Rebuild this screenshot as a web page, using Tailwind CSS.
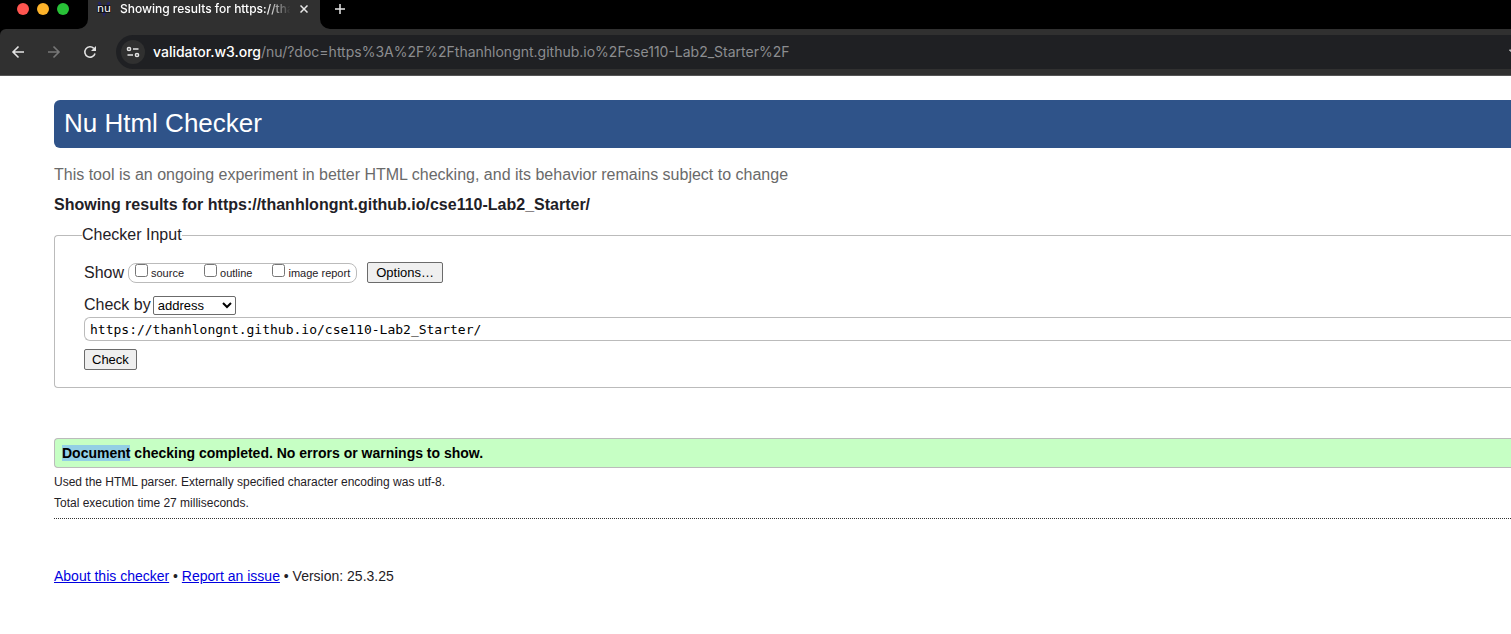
<!DOCTYPE html>
<html lang="en">
<head>
<meta charset="utf-8">
<title>Showing results for https://thanhlongnt.github.io/cse110-Lab2_Starter/</title>
<script src="https://cdn.jsdelivr.net/npm/@tailwindcss/browser@4"></script>
</head>
<body class="bg-white font-['Liberation_Sans',Arial,sans-serif] text-base text-[#1f2126] overflow-x-hidden">

<!-- Browser chrome -->
<header class="bg-black font-[Inter,sans-serif]">
  <div class="flex h-[29px] items-end">
    <div class="flex h-[26px] w-[78px] shrink-0 gap-2 pl-[17px]">
      <span class="size-3 rounded-full bg-[#ff5550]"></span>
      <span class="size-3 rounded-full bg-[#fdb32a]"></span>
      <span class="size-3 rounded-full bg-[#28c137]"></span>
    </div>
    <svg class="size-[10px] shrink-0" viewBox="0 0 10 10" fill="#303030" aria-hidden="true"><path d="M10 0V10H0A10 10 0 0 0 10 0Z"/></svg>
    <div class="flex h-[29px] w-[232px] shrink-0 items-start rounded-br-none bg-[#303030] pl-2">
      <svg class="h-[18px] w-4 shrink-0" viewBox="0 0 16 18" aria-hidden="true">
        <path d="M3 2 8 14 13 2" fill="none" stroke="#25256a" stroke-width="2.500"/>
        <rect x="1" y="5" width="14" height="8" rx="2" fill="#14141c"/>
        <text x="8" y="12" text-anchor="middle" font-family="DejaVu Sans, sans-serif" font-size="11" fill="#fff">nu</text>
      </svg>
      <span class="ml-2 w-[174px] whitespace-nowrap text-xs font-medium leading-[18px] text-white [mask-image:linear-gradient(to_right,black_84%,transparent_98%)]">Showing results for https://tha</span>
      <button type="button" aria-label="Close tab" class="ml-[2px] mt-px flex size-4 items-center justify-center text-[#e8e8e8]">
        <svg class="size-2" viewBox="0 0 8 8" fill="none" stroke="currentColor" stroke-width="1.500"><path d="M.5 .5 7.500 7.500M7.500 .5.5 7.500"/></svg>
      </button>
    </div>
    <svg class="size-[10px] shrink-0" viewBox="0 0 10 10" fill="#303030" aria-hidden="true"><path d="M0 0V10H10A10 10 0 0 1 0 0Z"/></svg>
    <button type="button" aria-label="New tab" class="flex h-[29px] w-5 justify-center pt-1 text-[#e8e8e8]">
      <svg class="size-[10px]" viewBox="0 0 10 10" fill="none" stroke="currentColor" stroke-width="1.500"><path d="M5 0V10M0 5H10"/></svg>
    </button>
  </div>
  <div class="flex h-[47px] items-center rounded-tl-md border-b border-[#555] bg-[#303030] pl-[10px]">
    <button type="button" aria-label="Back" class="size-4 text-[#e3e3e3]"><svg viewBox="0 0 16 16" fill="none" stroke="currentColor" stroke-width="1.600"><path d="M14 8H3M8.500 2.500 3 8 8.500 13.500"/></svg></button>
    <button type="button" aria-label="Forward" class="ml-5 size-4 text-[#777]"><svg viewBox="0 0 16 16" fill="none" stroke="currentColor" stroke-width="1.600"><path d="M2 8H13M7.500 2.500 13 8 7.500 13.500"/></svg></button>
    <button type="button" aria-label="Reload" class="ml-5 size-4 text-[#e3e3e3]"><svg viewBox="0 0 16 16" fill="none" stroke="currentColor" stroke-width="1.600"><path d="M13 9.500A5.200 5.200 0 1 1 11.800 4.400"/><path d="M14 2V7H9Z" fill="currentColor" stroke="none"/></svg></button>
    <div class="ml-[18px] flex h-[34px] flex-1 items-center overflow-hidden rounded-l-full bg-[#1f2023] pl-[5px] text-sm">
      <button type="button" aria-label="View site information" class="flex size-6 shrink-0 items-center justify-center rounded-full bg-[#303030] text-[#e3e3e3]">
        <svg class="size-[14px]" viewBox="0 0 14 14" fill="none" stroke="currentColor" stroke-width="1.500"><circle cx="3" cy="4" r="1.600"/><path d="M7 4H12.500M1.500 10H7"/><circle cx="11" cy="10" r="1.600"/></svg>
      </button>
      <a href="#" class="ml-2 flex-1 whitespace-nowrap text-[#8c8d90]"><span class="font-medium text-white">validator.w3.org</span>/nu/?doc=https%3A%2F%2Fthanhlongnt.github.io%2Fcse110-Lab2_Starter%2F</a>
      <svg class="-mr-[14px] size-4 shrink-0" viewBox="0 0 16 16" fill="none" stroke="#d0d0d0" stroke-width="1.300" aria-hidden="true"><path d="M8 1 9.900 5.800 15 6.300 11.100 9.600 12.300 14.600 8 12 3.700 14.600 4.900 9.600 1 6.300 6.100 5.800Z"/></svg>
    </div>
  </div>
</header>

<main class="pl-[54px] pt-6">
  <h1 class="rounded-l-md bg-[#2f5389] pb-[2px] pl-[10px] text-[26px] leading-[46px] text-white">Nu Html Checker</h1>
  <p class="mt-[15px] leading-6 text-[#6a6a6a]">This tool is an ongoing experiment in better HTML checking, and its behavior remains subject to change</p>
  <h2 class="mt-[6px] font-bold leading-6">Showing results for https://thanhlongnt.github.io/cse110-Lab2_Starter/</h2>

  <form>
    <fieldset class="mt-[6px] rounded-l border border-r-0 border-[#bbb] pb-[17px] pl-[29px]">
      <legend class="-ml-[2px] leading-6">Checker Input</legend>
      <div class="mt-[15px] flex items-center">
        <span class="w-11 leading-5">Show</span>
        <div class="flex h-5 items-center gap-5 rounded-lg border border-[#bbb] px-[6px] text-[11px] leading-4">
          <label class="flex items-center gap-[3px]"><input type="checkbox" class="mb-1 size-[13px]">source</label>
          <label class="flex items-center gap-[3px]"><input type="checkbox" class="mb-1 size-[13px]">outline</label>
          <label class="flex items-center gap-[3px]"><input type="checkbox" class="mb-1 size-[13px]">image report</label>
        </div>
        <button type="button" class="ml-[10px] h-[21px] rounded-[2px] border border-[#6b6b6b] bg-[#efefef] px-2 text-[13px] leading-[19px] text-black">Options…</button>
      </div>
      <div class="mt-3 flex items-center gap-[2px]">
        <label for="docselect" class="leading-5">Check by</label>
        <select id="docselect" class="h-[19px] w-[83px] rounded-[2px] border border-[#6b6b6b] bg-white text-[13px] leading-4 text-black"><option>address</option><option>file upload</option><option>text input</option></select>
      </div>
      <input type="url" aria-label="Address of page to check" value="https://thanhlongnt.github.io/cse110-Lab2_Starter/" class="mt-[2px] block h-6 w-full rounded-l-md border border-r-0 border-[#bbb] bg-white px-[5px] font-['DejaVu_Sans_Mono',monospace] text-[13px] text-black">
      <button type="submit" class="mt-2 block h-[21px] rounded-[2px] border border-[#6b6b6b] bg-[#efefef] px-[7px] text-[13px] leading-[19px] text-black">Check</button>
    </fieldset>
  </form>

  <p class="mt-[50px] rounded-l border border-r-0 border-[#bbb] bg-[#c6ffc4] pl-[7px] text-sm font-bold leading-7 text-black"><mark class="bg-[#93cfe5] text-black">Document</mark> checking completed. No errors or warnings to show.</p>
  <div class="border-b border-dotted border-[#333] pb-1 pt-1 text-xs leading-[21px]">
    <p>Used the HTML parser. Externally specified character encoding was utf-8.</p>
    <p>Total execution time 27 milliseconds.</p>
  </div>
  <footer class="mt-[47px] text-sm"><a href="#" class="text-[#0000e0] underline">About this checker</a> • <a href="#" class="text-[#0000e0] underline">Report an issue</a> • Version: 25.3.25</footer>
</main>
</body>
</html>
